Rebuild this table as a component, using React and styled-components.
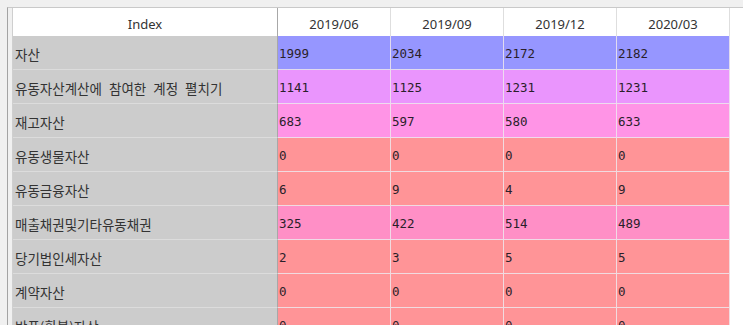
import React from "react";
import styled, { createGlobalStyle } from "styled-components";

const Global = createGlobalStyle`
  html, body { margin: 0; padding: 0; background: #f0f0f0; overflow: hidden; }
  body { width: 743px; height: 325px; }
`;

const Page = styled.div`
  padding: 7px 0 0 7px;
  height: 325px;
  box-sizing: border-box;
`;

const Frame = styled.div`
  display: flex;
  height: 100%;
  background: #ffffff;
  border-left: 1px solid #a3a3a3;
  border-top: 1px solid #c9c9c9;
`;

const Gutter = styled.div`
  width: 4px;
  flex: none;
  background: #f0f0f0;
  border-right: 1px solid #cfcfcf;
`;

const Grid = styled.div`
  display: grid;
  grid-template-columns: 265px repeat(4, 113px);
  grid-auto-rows: 34px;
  grid-template-rows: 28px;
  align-content: start;
`;

const HeadCell = styled.div`
  display: flex;
  align-items: center;
  justify-content: center;
  padding-top: 4px;
  box-sizing: border-box;
  background: #ffffff;
  border-right: 1px solid ${(p) => (p.$index ? "#a8a8a8" : "#dedede")};
  font-family: "Noto Sans", "Open Sans", sans-serif;
  font-size: 13px;
  color: #333333;
`;

const IndexCell = styled.div`
  display: flex;
  align-items: center;
  padding-left: 2px;
  padding-top: 2px;
  box-sizing: border-box;
  background: #cccccc;
  border-right: 1px solid #a8a8a8;
  border-bottom: 1px solid #dcdcdc;
  font-family: "Noto Sans CJK KR", "Noto Sans", sans-serif;
  font-size: 13.5px;
  word-spacing: 4px;
  color: #333333;
  white-space: nowrap;
`;

const DataCell = styled.div`
  display: flex;
  align-items: center;
  padding-left: 1px;
  padding-top: 1px;
  box-sizing: border-box;
  background: ${(p) => p.$bg};
  border-right: 1px solid rgba(238, 232, 236, 0.85);
  border-bottom: 1px solid rgba(238, 232, 236, 0.85);
  font-family: "DejaVu Sans Mono", "Liberation Mono", monospace;
  font-size: 12.5px;
  color: #2a1f2a;
`;

const COLORS = {
  blue: "#9696ff",
  violet: "#ea95fd",
  pink: "#ff94e6",
  rose: "#ff8fc6",
  salmon: "#ff9497",
};

const headers = ["2019/06", "2019/09", "2019/12", "2020/03"];

const rows = [
  { label: "자산", values: [1999, 2034, 2172, 2182], color: "blue" },
  { label: "유동자산계산에 참여한 계정 펼치기", values: [1141, 1125, 1231, 1231], color: "violet" },
  { label: "재고자산", values: [683, 597, 580, 633], color: "pink" },
  { label: "유동생물자산", values: [0, 0, 0, 0], color: "salmon" },
  { label: "유동금융자산", values: [6, 9, 4, 9], color: "salmon" },
  { label: "매출채권및기타유동채권", values: [325, 422, 514, 489], color: "rose" },
  { label: "당기법인세자산", values: [2, 3, 5, 5], color: "salmon" },
  { label: "계약자산", values: [0, 0, 0, 0], color: "salmon" },
  { label: "반품(환불)자산", values: [0, 0, 0, 0], color: "salmon" },
];

export default function App() {
  return (
    <>
      <Global />
      <Page>
        <Frame>
          <Gutter />
          <Grid>
            <HeadCell $index>Index</HeadCell>
            {headers.map((h) => (
              <HeadCell key={h}>{h}</HeadCell>
            ))}
            {rows.map((r) => (
              <React.Fragment key={r.label}>
                <IndexCell>{r.label}</IndexCell>
                {r.values.map((v, i) => (
                  <DataCell key={i} $bg={COLORS[r.color]}>
                    {v}
                  </DataCell>
                ))}
              </React.Fragment>
            ))}
          </Grid>
        </Frame>
      </Page>
    </>
  );
}
